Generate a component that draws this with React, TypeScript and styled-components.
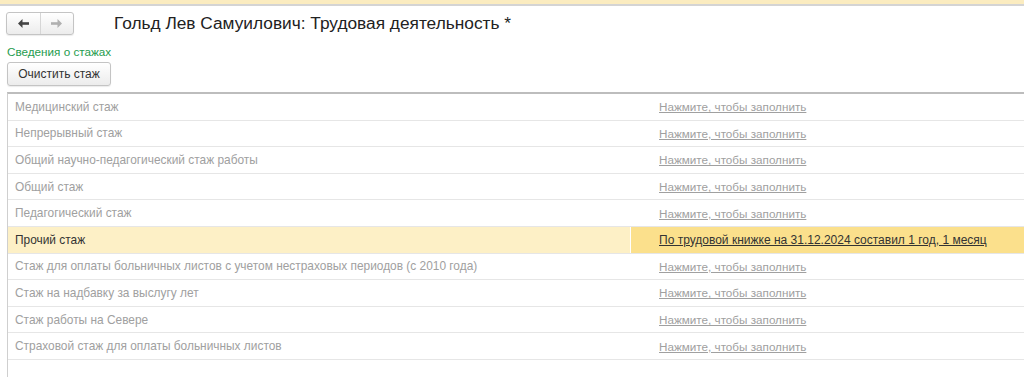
import React from "react";
import styled, { createGlobalStyle } from "styled-components";

const Global = createGlobalStyle`
  html, body { margin: 0; padding: 0; background: #fff; }
  body { font-family: Arial, "Liberation Sans", sans-serif; overflow: hidden; }
`;

const Page = styled.div`
  width: 1024px;
  height: 377px;
  display: flex;
  flex-direction: column;
  overflow: hidden;
`;

const TopStrip = styled.div`
  height: 4px;
  background: #fbecc0;
  border-bottom: 2px solid #d4d4d4;
  flex: none;
`;

const Header = styled.div`
  display: flex;
  align-items: center;
  padding: 6px 0 0 6px;
  height: 22px;
`;

const NavGroup = styled.div`
  display: flex;
  width: 66px;
  height: 21px;
  border: 1px solid #c4c4c4;
  border-radius: 3px;
  background: linear-gradient(#ffffff, #ececec);
  box-shadow: 0 1px 1px rgba(0,0,0,0.08);
`;

const NavButton = styled.div<{ $divider?: boolean }>`
  flex: 1;
  display: flex;
  align-items: center;
  justify-content: center;
  border-left: ${p => (p.$divider ? "1px solid #d6d6d6" : "none")};
`;

const Title = styled.div`
  margin-left: 40px;
  font-size: 17.3px;
  color: #222;
  white-space: nowrap;
`;

const SectionLink = styled.div`
  margin: 11px 0 0 7px;
  font-size: 11.7px;
  color: #1e9c4e;
`;

const ClearButton = styled.div`
  margin: 4px 0 0 7px;
  width: 102px;
  height: 22px;
  border: 1px solid #c4c4c4;
  border-radius: 3px;
  background: linear-gradient(#ffffff, #ececec);
  box-shadow: 0 1px 1px rgba(0,0,0,0.08);
  display: flex;
  align-items: center;
  justify-content: center;
  font-size: 12px;
  color: #333;
`;

const Table = styled.div`
  margin: 6px 0 0 7px;
  flex: 1;
  border-top: 2px solid #bdbdbd;
  border-left: 1px solid #cfcfcf;
  display: flex;
  flex-direction: column;
`;

const Row = styled.div`
  display: grid;
  grid-template-columns: 623px 1fr;
  height: 25.6px;
  border-bottom: 1px solid #e6e6e6;
  flex: none;
`;

const NameCell = styled.div<{ $sel?: boolean }>`
  display: flex;
  align-items: center;
  padding-left: 7px;
  font-size: 11.9px;
  color: ${p => (p.$sel ? "#333" : "#a0a0a0")};
  background: ${p => (p.$sel ? "#fdf0c6" : "transparent")};
  border-right: 1px solid ${p => (p.$sel ? "#ffffff" : "transparent")};
  white-space: nowrap;
`;

const ValueCell = styled.div<{ $sel?: boolean }>`
  display: flex;
  align-items: center;
  padding-left: 28px;
  background: ${p => (p.$sel ? "#fbe08c" : "transparent")};
`;

const ValueLink = styled.span<{ $sel?: boolean }>`
  font-size: ${p => (p.$sel ? "12px" : "11.7px")};
  color: ${p => (p.$sel ? "#333" : "#a0a0a0")};
  text-decoration: underline;
  white-space: nowrap;
`;

const ArrowIcon = ({ dir, color }: { dir: "l" | "r"; color: string }) => (
  <svg width="13" height="11" viewBox="0 0 13 11">
    {dir === "l" ? (
      <>
        <path d="M1 5.5 L5.5 1 L5.5 10 Z" fill={color} />
        <rect x="5" y="4.2" width="7" height="2.6" fill={color} />
      </>
    ) : (
      <>
        <path d="M12 5.5 L7.5 1 L7.5 10 Z" fill={color} />
        <rect x="1" y="4.2" width="7" height="2.6" fill={color} />
      </>
    )}
  </svg>
);

const rows = [
  { name: "Медицинский стаж" },
  { name: "Непрерывный стаж" },
  { name: "Общий научно-педагогический стаж работы" },
  { name: "Общий стаж" },
  { name: "Педагогический стаж" },
  { name: "Прочий стаж", value: "По трудовой книжке на 31.12.2024 составил 1 год, 1 месяц", sel: true },
  { name: "Стаж для оплаты больничных листов с учетом нестраховых периодов (с 2010 года)" },
  { name: "Стаж на надбавку за выслугу лет" },
  { name: "Стаж работы на Севере" },
  { name: "Страховой стаж для оплаты больничных листов" },
];

export default function App() {
  return (
    <>
      <Global />
      <Page>
        <TopStrip />
        <Header>
          <NavGroup>
            <NavButton>
              <ArrowIcon dir="l" color="#444" />
            </NavButton>
            <NavButton $divider>
              <ArrowIcon dir="r" color="#b0b0b0" />
            </NavButton>
          </NavGroup>
          <Title>Гольд Лев Самуилович: Трудовая деятельность *</Title>
        </Header>
        <SectionLink>Сведения о стажах</SectionLink>
        <ClearButton>Очистить стаж</ClearButton>
        <Table>
          {rows.map(r => (
            <Row key={r.name}>
              <NameCell $sel={r.sel}>{r.name}</NameCell>
              <ValueCell $sel={r.sel}>
                <ValueLink $sel={r.sel}>{r.value ?? "Нажмите, чтобы заполнить"}</ValueLink>
              </ValueCell>
            </Row>
          ))}
        </Table>
      </Page>
    </>
  );
}
